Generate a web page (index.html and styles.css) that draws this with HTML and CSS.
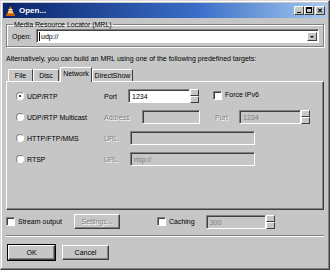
FILE: index.html
```html
<!DOCTYPE html>
<html lang="en">
<head>
  <meta charset="UTF-8">
  <title>Open...</title>
  <link rel="stylesheet" href="styles.css">
</head>
<body>

<div class="window">
  <div class="titlebar">
    <svg class="appicon" width="9" height="10" viewBox="0 0 9 10">
      <polygon points="4.5,0 8,8 1,8" fill="#f08000"/>
      <rect x="2.6" y="3" width="3.8" height="1.2" fill="#fff"/>
      <rect x="2" y="5.4" width="5" height="1.2" fill="#fff"/>
      <rect x="0" y="8" width="9" height="2" fill="#c06000"/>
    </svg>
    <span class="title">Open...</span>
    <div class="tbtns">
      <span class="tbtn"><i class="min"></i></span>
      <span class="tbtn"><i class="max"></i></span>
      <span class="tbtn close">✕</span>
    </div>
  </div>

  <div class="content">
    <fieldset class="group">
      <legend>Media Resource Locator (MRL)</legend>
      <div class="mrl">
        <label>Open:</label>
        <div class="combo">
          <span class="field">udp://</span>
          <span class="drop"><i></i></span>
        </div>
      </div>
    </fieldset>

    <p class="hint">Alternatively, you can build an MRL using one of the following predefined targets:</p>

    <div class="tabs">
      <span class="tab">File</span>
      <span class="tab">Disc</span>
      <span class="tab active">Network</span>
      <span class="tab">DirectShow</span>
    </div>

    <div class="panel">
      <div class="row">
        <span class="radio on"></span><span class="rlabel">UDP/RTP</span>
        <span class="flabel">Port</span>
        <span class="input w62">1234</span><span class="spin"><i></i><i></i></span>
        <span class="check"></span><span class="clabel">Force IPv6</span>
      </div>
      <div class="row">
        <span class="radio"></span><span class="rlabel">UDP/RTP Multicast</span>
        <span class="flabel off">Address</span>
        <span class="input dis w58"></span>
        <span class="flabel off p2">Port</span>
        <span class="input dis w62">1234</span><span class="spin"><i></i><i></i></span>
      </div>
      <div class="row">
        <span class="radio"></span><span class="rlabel">HTTP/FTP/MMS</span>
        <span class="flabel off">URL</span>
        <span class="input dis w125"></span>
      </div>
      <div class="row">
        <span class="radio"></span><span class="rlabel">RTSP</span>
        <span class="flabel off">URL</span>
        <span class="input dis w125">rtsp://</span>
      </div>
    </div>

    <div class="opts">
      <span class="check"></span><span class="olabel">Stream output</span>
      <span class="button dis settings">Settings...</span>
      <span class="check c2"></span><span class="olabel">Caching</span>
      <span class="input dis w60">300</span><span class="spin"><i></i><i></i></span>
    </div>

    <div class="sep"></div>

    <div class="buttons">
      <span class="button def">OK</span>
      <span class="button">Cancel</span>
    </div>
  </div>
</div>

</body>
</html>
```

FILE: styles.css
```css
body {
  margin: 0;
  background: #c6c6c6;
  font-family: 'Liberation Sans', Arial, sans-serif;
  font-size: 7px;
  color: #000;
}
.window {
  width: 330px;
  height: 270px;
  box-sizing: border-box;
  background: #c6c6c6;
  border: 1px solid #dcdcdc;
  border-right-color: #404040;
  border-bottom-color: #404040;
  box-shadow: inset -1px -1px #808080, inset 1px 1px #fff;
  padding: 2px;
}
.titlebar {
  height: 15px;
  background: linear-gradient(to right, #0a246a, #3a6ec8 60%, #a6caf0);
  display: flex;
  align-items: center;
  padding: 0 2px 0 3px;
}
.appicon {
  margin-right: 4px;
}
.title {
  color: #fff;
  font-weight: bold;
  font-size: 8px;
  flex: 1;
}
.tbtns {
  display: flex;
}
.tbtn {
  width: 10px;
  height: 9px;
  box-sizing: border-box;
  background: #c6c6c6;
  border: 1px solid #fff;
  border-right-color: #404040;
  border-bottom-color: #404040;
  position: relative;
  font-size: 7px;
  line-height: 7px;
  text-align: center;
  font-weight: bold;
}
.tbtn.close {
  margin-left: 1px;
}
.tbtn .min {
  position: absolute;
  left: 2px;
  bottom: 1px;
  width: 4px;
  height: 1px;
  background: #000;
}
.tbtn .max {
  position: absolute;
  left: 1px;
  top: 0;
  box-sizing: border-box;
  width: 6px;
  height: 6px;
  border: 1px solid #000;
  border-top-width: 2px;
}
.content {
  padding: 3px 3px 0 3px;
}
.group {
  margin: 0;
  padding: 0 4px 4px 5px;
  border: 1px solid #808080;
  box-shadow: 1px 1px #fff, inset 1px 1px #fff;
  height: 26px;
  box-sizing: border-box;
}
.group legend {
  padding: 0 1px;
  margin-left: 1px;
}
.mrl {
  display: flex;
  align-items: center;
  margin-top: 1px;
}
.mrl label {
  width: 24px;
}
.combo {
  flex: 1;
  display: flex;
  height: 14px;
  box-sizing: border-box;
  background: #fff;
  border: 1px solid #808080;
  border-right-color: #fff;
  border-bottom-color: #fff;
  box-shadow: inset 1px 1px #404040;
  padding: 2px 1px 1px 2px;
}
.field {
  flex: 1;
  line-height: 9px;
  border-left: 1px solid #000;
  padding-left: 1px;
}
.drop {
  width: 10px;
  height: 9px;
  box-sizing: border-box;
  background: #c6c6c6;
  border: 1px solid #fff;
  border-right-color: #404040;
  border-bottom-color: #404040;
  display: flex;
  align-items: center;
  justify-content: center;
}
.drop i {
  border: 2px solid transparent;
  border-top: 2px solid #000;
  margin-top: 2px;
}
.hint {
  margin: 7px 0 0 0;
  line-height: 9px;
}
.tabs {
  display: flex;
  align-items: flex-end;
  margin-top: 4px;
  padding-left: 2px;
  height: 14px;
  position: relative;
  z-index: 1;
}
.tab {
  height: 12px;
  line-height: 12px;
  text-align: center;
  border: 1px solid #fff;
  border-bottom: none;
  border-right-color: #404040;
  box-sizing: border-box;
}
.tab.active {
  background: #c6c6c6;
  line-height: 11px;
  height: 15px;
  margin: 0 0 -1px 1px;
}
.tab:first-child {
  width: 25px;
}
.tab:nth-child(2) {
  width: 26px;
}
.tab:nth-child(3) {
  width: 32px;
}
.tab:nth-child(4) {
  width: 41px;
}
.panel {
  height: 129px;
  box-sizing: border-box;
  border: 1px solid #fff;
  border-right-color: #404040;
  border-bottom-color: #404040;
  box-shadow: inset -1px -1px #808080;
  padding: 7px 0 0 9px;
}
.row {
  display: flex;
  align-items: center;
  height: 14px;
  margin-bottom: 7px;
}
.radio {
  width: 8px;
  height: 8px;
  box-sizing: border-box;
  border-radius: 50%;
  background: #fff;
  border: 1px solid #808080;
  border-right-color: #fff;
  border-bottom-color: #fff;
  position: relative;
}
.radio.on::after {
  content: "";
  position: absolute;
  left: 2px;
  top: 2px;
  width: 2px;
  height: 2px;
  background: #000;
  border-radius: 50%;
}
.rlabel {
  margin-left: 3px;
  width: 77px;
}
.flabel {
  width: 24px;
}
.flabel.off, .off {
  color: #808080;
  text-shadow: 1px 1px #fff;
}
.flabel.p2 {
  margin-left: 15px;
}
.input {
  height: 14px;
  box-sizing: border-box;
  background: #fff;
  border: 1px solid #808080;
  border-right-color: #fff;
  border-bottom-color: #fff;
  box-shadow: inset 1px 1px #404040;
  padding: 2px 0 0 3px;
  line-height: 9px;
}
.input.dis {
  background: #c6c6c6;
  color: #808080;
}
.w58 { width: 58px; }
.w60 { width: 60px; }
.w62 { width: 62px; }
.w125 { width: 125px; }
.row .input.w58 { margin-left: 14px; }
.row .input.w125 { margin-left: 2px; }
.spin {
  width: 9px;
  height: 14px;
  display: flex;
  flex-direction: column;
}
.spin i {
  flex: 1;
  box-sizing: border-box;
  background: #c6c6c6;
  border: 1px solid #fff;
  border-right-color: #404040;
  border-bottom-color: #404040;
}
.check {
  width: 9px;
  height: 9px;
  box-sizing: border-box;
  background: #fff;
  border: 1px solid #808080;
  border-right-color: #fff;
  border-bottom-color: #fff;
  box-shadow: inset 1px 1px #404040;
}
.row .check {
  margin-left: 14px;
  align-self: flex-start;
  margin-top: 2px;
}
.clabel {
  margin-left: 3px;
  align-self: flex-start;
  margin-top: 2px;
}
.opts {
  display: flex;
  align-items: center;
  margin-top: 4px;
  height: 15px;
}
.olabel {
  margin-left: 3px;
}
.settings {
  margin-left: 12px;
  width: 46px;
}
.c2 {
  margin-left: 37px;
}
.opts .input {
  margin-left: 11px;
}
.button {
  height: 15px;
  box-sizing: border-box;
  border: 1px solid #fff;
  border-right-color: #404040;
  border-bottom-color: #404040;
  box-shadow: inset -1px -1px #808080;
  text-align: center;
  line-height: 13px;
}
.button.dis {
  color: #808080;
  text-shadow: 1px 1px #fff;
}
.sep {
  margin-top: 6px;
  height: 1px;
  background: #808080;
  border-bottom: 1px solid #fff;
}
.buttons {
  display: flex;
  gap: 7px;
  margin-top: 8px;
  padding-left: 2px;
}
.buttons .button {
  width: 47px;
}
.button.def {
  outline: 1px solid #000;
}
```
